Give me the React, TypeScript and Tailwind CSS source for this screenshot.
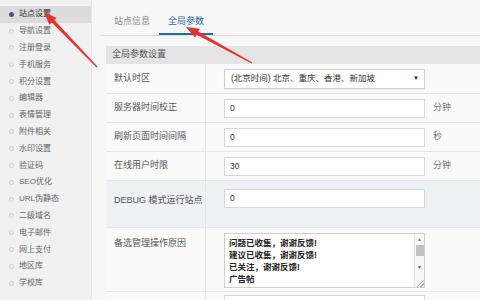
const menu = [
  "站点设置",
  "导航设置",
  "注册登录",
  "手机服务",
  "积分设置",
  "编辑器",
  "表情管理",
  "附件相关",
  "水印设置",
  "验证码",
  "SEO优化",
  "URL伪静态",
  "二级域名",
  "电子邮件",
  "网上支付",
  "地区库",
  "学校库",
]

const reasons = ["问题已收集，谢谢反馈!", "建议已收集，谢谢反馈!", "已关注，谢谢反馈!", "广告帖"]

// arrow polygon from tail to tip, widening shaft + head
function arrowPoints(tx: number, ty: number, hx: number, hy: number) {
  const dx = hx - tx
  const dy = hy - ty
  const len = Math.sqrt(dx * dx + dy * dy)
  const ux = dx / len
  const uy = dy / len
  const nx = -uy
  const ny = ux
  const headLen = 13
  const bx = hx - ux * headLen
  const by = hy - uy * headLen
  const p = (x: number, y: number) => `${x.toFixed(1)},${y.toFixed(1)}`
  return [
    p(tx + nx * 0.7, ty + ny * 0.7),
    p(bx + nx * 1.8, by + ny * 1.8),
    p(bx + nx * 5, by + ny * 5),
    p(hx, hy),
    p(bx - nx * 5, by - ny * 5),
    p(bx - nx * 1.8, by - ny * 1.8),
    p(tx - nx * 0.7, ty - ny * 0.7),
  ].join(" ")
}

function Row({
  label,
  children,
  unit,
  className = "",
}: {
  label: string
  children: React.ReactNode
  unit?: string
  className?: string
}) {
  return (
    <div className={"flex shrink-0 border-b border-[#e6e6e6] " + className}>
      <div className="w-[100px] shrink-0 border-r border-[#e3e3e3] pl-[8px] flex items-center">{label}</div>
      <div className="w-[221px] shrink-0 pl-[18px] flex items-center">{children}</div>
      <div className="flex-1 pl-[6px] flex items-center text-[#777]">{unit}</div>
    </div>
  )
}

function Input({ value }: { value: string }) {
  return (
    <div className="w-[201px] h-[19px] bg-white border border-[#d6d6d6] pl-[5px] flex items-center text-[8.5px] text-[#333]">
      {value}
    </div>
  )
}

export default function App() {
  return (
    <div className="relative flex w-[480px] h-[300px] overflow-hidden bg-[#f7f7f7] text-[#555] font-['Liberation_Sans','Noto_Sans_CJK_SC',sans-serif]">
      {/* sidebar */}
      <div className="w-[92px] shrink-0 bg-[#f1f1f1] border-r border-[#e6e6e6] pt-[6px]">
        {menu.map((m, i) => (
          <div
            key={m}
            className={
              "flex items-center h-[16.8px] pl-[9px] gap-[5px] text-[8px] " +
              (i === 0 ? "bg-[#dcdcdc] text-[#333]" : "text-[#666]")
            }
          >
            <span
              className={
                "w-[5px] h-[5px] rounded-full " +
                (i === 0 ? "bg-[#4b5a6b]" : "border border-[#cfcfcf]")
              }
            />
            {m}
          </div>
        ))}
      </div>

      {/* main */}
      <div className="flex-1 pl-[8px] flex flex-col overflow-hidden">
        <div className="flex shrink-0 h-[36px] border-b border-[#dedede] pl-[5px] text-[9px]">
          <div className="w-[54px] flex items-end justify-center pb-[7px] text-[#888]">站点信息</div>
          <div className="w-[54px] flex items-end justify-center pb-[5px] text-[#2a6aa8] border-b-2 border-[#2a6aa8]">
            全局参数
          </div>
        </div>

        <div className="shrink-0 ml-[6px] mt-[10px] text-[9px] bg-[#fafafa] flex flex-col">
          <div className="shrink-0 h-[18px] bg-[#e4e4e4] pl-[6px] flex items-center text-[#555]">全局参数设置</div>

          <Row label="默认时区" className="h-[30px]">
            <div className="w-[201px] h-[20px] bg-white border border-[#cfcfcf] shadow-[0_1px_1px_rgba(0,0,0,0.06)] pl-[6px] pr-[5px] flex items-center justify-between text-[8.5px] text-[#333]">
              <span>(北京时间) 北京、重庆、香港、新加坡</span>
              <span className="text-[6px] text-[#222]">▼</span>
            </div>
          </Row>
          <Row label="服务器时间校正" unit="分钟" className="h-[29px]">
            <Input value="0" />
          </Row>
          <Row label="刷新页面时间间隔" unit="秒" className="h-[29px]">
            <Input value="0" />
          </Row>
          <Row label="在线用户时限" unit="分钟" className="h-[29px]">
            <Input value="30" />
          </Row>

          <div className="flex shrink-0 h-[47px] border-b border-[#e3e8eb] bg-[#edf2f5]">
            <div className="w-[100px] shrink-0 border-r border-[#e0e5e8] pl-[8px] pt-[13px]">DEBUG 模式运行站点</div>
            <div className="w-[221px] shrink-0 pl-[18px] pt-[8px]">
              <Input value="0" />
            </div>
            <div className="flex-1" />
          </div>

          <div className="flex shrink-0 h-[64px] border-b border-[#e6e6e6]">
            <div className="w-[100px] shrink-0 border-r border-[#e3e3e3] pl-[8px] pt-[9px]">备选管理操作原因</div>
            <div className="w-[221px] shrink-0 pl-[18px] pt-[5px]">
              <div className="w-[201px] h-[55px] bg-white border border-[#d0d0d0] flex overflow-hidden">
                <div className="flex-1 pl-[4px] pt-[3px] text-[8.5px] leading-[12px] text-[#222] font-bold overflow-hidden">
                  {reasons.map((r) => (
                    <div key={r} className="whitespace-nowrap">{r}</div>
                  ))}
                </div>
                <div className="w-[10px] border-l border-[#e6e6e6] bg-[#f7f7f7] flex flex-col items-center">
                  <span className="text-[5px] text-[#888] mt-[2px]">▲</span>
                  <div className="w-[8px] h-[11px] bg-[#c2c2c2] mt-[1px]" />
                  <span className="text-[5px] text-[#555] mt-[8px]">▼</span>
                  <div className="mt-auto w-[8px] h-[8px] bg-[linear-gradient(135deg,transparent_55%,#aaa_55%,#aaa_62%,transparent_62%,transparent_75%,#aaa_75%,#aaa_82%,transparent_82%)]" />
                </div>
              </div>
            </div>
            <div className="flex-1" />
          </div>

          <div className="flex shrink-0 h-[20px]">
            <div className="w-[100px] shrink-0 border-r border-[#e3e3e3]" />
            <div className="w-[221px] shrink-0 pl-[18px] pt-[3px]">
              <div className="w-[201px] h-[19px] bg-white border border-[#d6d6d6]" />
            </div>
          </div>
        </div>
      </div>

      {/* annotation arrows */}
      <svg className="absolute inset-0 pointer-events-none" width="480" height="300" viewBox="0 0 480 300">
        <polygon points={arrowPoints(97, 67, 44, 12)} fill="#e8322d" />
        <polygon points={arrowPoints(252, 63, 186, 27)} fill="#e8322d" />
      </svg>
    </div>
  )
}
